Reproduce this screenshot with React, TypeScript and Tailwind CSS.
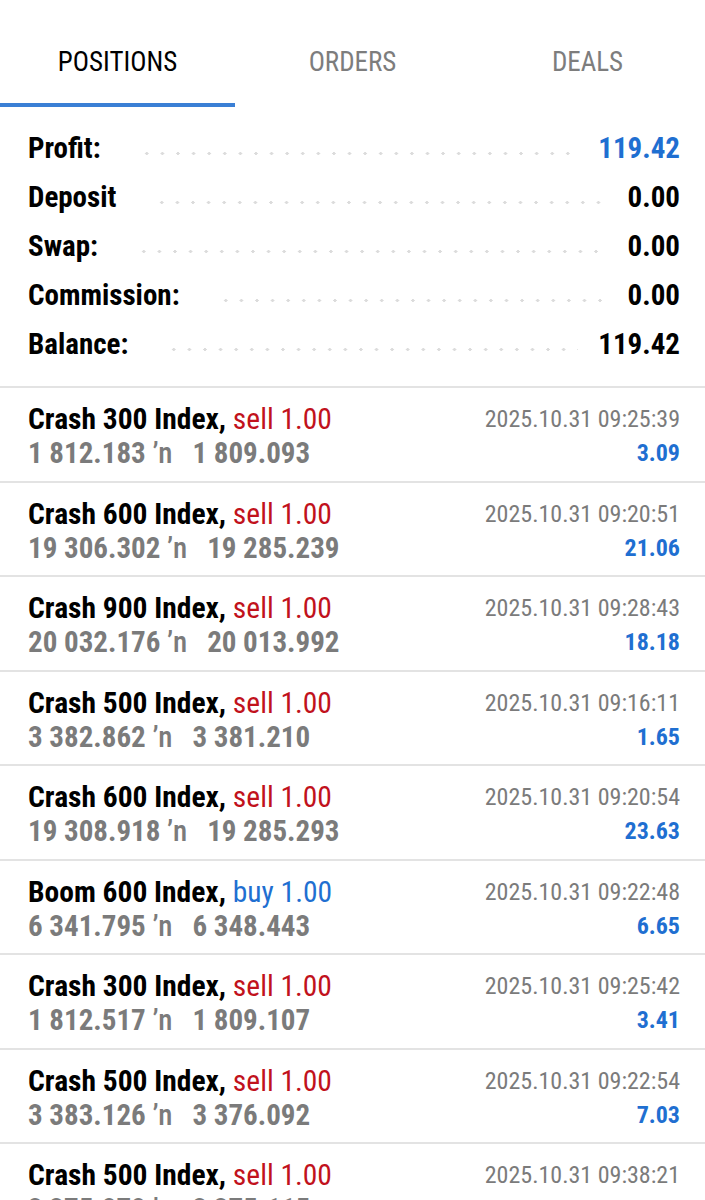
import React from 'react';

type Position = {
  symbol: string;
  side: 'sell' | 'buy';
  volume: string;
  open: string;
  close: string;
  time: string;
  profit: string;
};

const positions: Position[] = [
  { symbol: 'Crash 300 Index', side: 'sell', volume: '1.00', open: '1 812.183', close: '1 809.093', time: '2025.10.31 09:25:39', profit: '3.09' },
  { symbol: 'Crash 600 Index', side: 'sell', volume: '1.00', open: '19 306.302', close: '19 285.239', time: '2025.10.31 09:20:51', profit: '21.06' },
  { symbol: 'Crash 900 Index', side: 'sell', volume: '1.00', open: '20 032.176', close: '20 013.992', time: '2025.10.31 09:28:43', profit: '18.18' },
  { symbol: 'Crash 500 Index', side: 'sell', volume: '1.00', open: '3 382.862', close: '3 381.210', time: '2025.10.31 09:16:11', profit: '1.65' },
  { symbol: 'Crash 600 Index', side: 'sell', volume: '1.00', open: '19 308.918', close: '19 285.293', time: '2025.10.31 09:20:54', profit: '23.63' },
  { symbol: 'Boom 600 Index', side: 'buy', volume: '1.00', open: '6 341.795', close: '6 348.443', time: '2025.10.31 09:22:48', profit: '6.65' },
  { symbol: 'Crash 300 Index', side: 'sell', volume: '1.00', open: '1 812.517', close: '1 809.107', time: '2025.10.31 09:25:42', profit: '3.41' },
  { symbol: 'Crash 500 Index', side: 'sell', volume: '1.00', open: '3 383.126', close: '3 376.092', time: '2025.10.31 09:22:54', profit: '7.03' },
  { symbol: 'Crash 500 Index', side: 'sell', volume: '1.00', open: '3 375.878', close: '3 375.115', time: '2025.10.31 09:38:21', profit: '0.76' },
];

const summary = [
  { label: 'Profit:', value: '119.42', blue: true },
  { label: 'Deposit', value: '0.00' },
  { label: 'Swap:', value: '0.00' },
  { label: 'Commission:', value: '0.00' },
  { label: 'Balance:', value: '119.42' },
];

const font = "font-['Roboto_Condensed','Roboto',sans-serif]";

function Tabs() {
  return (
    <div className="flex h-[107px]">
      <div className="relative flex w-1/3 items-center justify-center pt-[18px] text-[27px] text-black">
        POSITIONS
        <div className="absolute bottom-0 left-0 h-[4px] w-full bg-[#3a7fd5]" />
      </div>
      <div className="flex w-1/3 items-center justify-center pt-[18px] text-[27px] text-[#7d7d7d]">ORDERS</div>
      <div className="flex w-1/3 items-center justify-center pt-[18px] text-[27px] text-[#7d7d7d]">DEALS</div>
    </div>
  );
}

function Summary() {
  return (
    <div className="flex flex-col pb-[17px] pl-[28px] pr-[25px] pt-[17px]">
      {summary.map((s) => (
        <div key={s.label} className="flex h-[49px] items-center">
          <span className="text-[29px] font-bold text-black">{s.label}</span>
          <div className="ml-[38px] mr-[20px] mt-[10px] h-[3px] flex-1 bg-[radial-gradient(circle,#dcdcdc_1.5px,transparent_1.7px)] bg-[length:15.6px_3px]" />
          <span className={`text-[29px] font-bold ${s.blue ? 'text-[#1f6fd1]' : 'text-black'}`}>{s.value}</span>
        </div>
      ))}
    </div>
  );
}

function Row({ p }: { p: Position }) {
  return (
    <div className="flex h-[94.5px] justify-between border-t-2 border-[#e3e3e3] pl-[28px] pr-[25px] pt-[14px]">
      <div className="flex flex-col">
        <div className="text-[29.5px] leading-[34px]">
          <span className="font-bold text-black">{p.symbol}, </span>
          <span className={p.side === 'sell' ? 'text-[#c1121c]' : 'text-[#1f6fd1]'}>
            {p.side} {p.volume}
          </span>
        </div>
        <div className="text-[29px] font-bold leading-[34px] text-[#7b7b7b]">
          {p.open} <span className="font-medium">ʼn</span>&nbsp;&nbsp; {p.close}
        </div>
      </div>
      <div className="flex flex-col items-end">
        <div className="text-[24px] leading-[34px] text-[#7b7b7b]">{p.time}</div>
        <div className="text-[24px] font-bold leading-[34px] text-[#1f6fd1]">{p.profit}</div>
      </div>
    </div>
  );
}

export default function App() {
  return (
    <div className={`h-[1200px] w-[705px] overflow-hidden bg-white ${font}`}>
      <Tabs />
      <Summary />
      <div className="flex flex-col">
        {positions.map((p, i) => (
          <Row key={i} p={p} />
        ))}
      </div>
    </div>
  );
}
